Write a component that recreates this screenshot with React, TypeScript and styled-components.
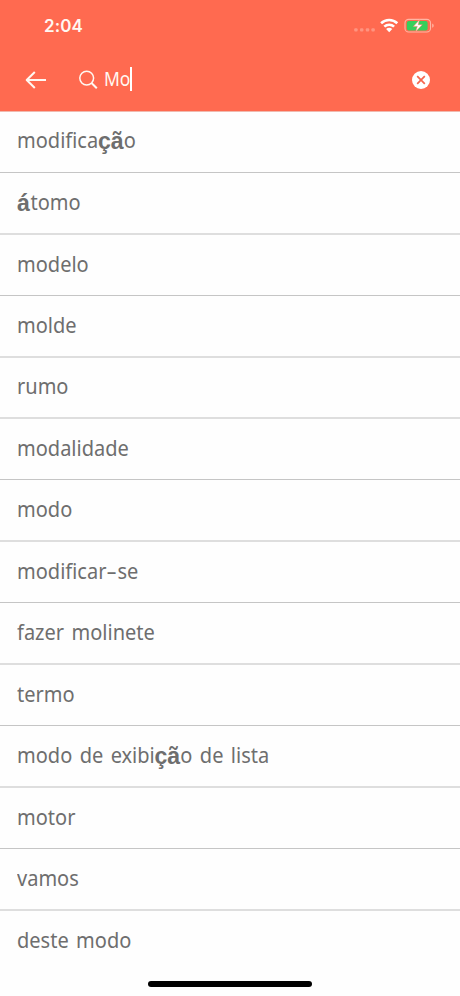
import React from "react";
import styled, { createGlobalStyle } from "styled-components";

const GlobalStyle = createGlobalStyle`
  * { box-sizing: border-box; }
  body { margin: 0; background: #fff; }
`;

const Screen = styled.div`
  width: 460px;
  height: 996px;
  display: flex;
  flex-direction: column;
  position: relative;
  overflow: hidden;
  background: #fefefe;
  font-family: "Noto Sans", sans-serif;
`;

const Header = styled.header`
  height: 112px;
  flex: none;
  background: #ff6a50;
  border-bottom: 1px solid #f0b9ae;
  color: #fff8f2;
`;

const StatusBar = styled.div`
  height: 50px;
  padding: 0 25px 0 44px;
  display: flex;
  align-items: center;
  justify-content: space-between;
`;

const Clock = styled.span`
  padding-top: 2px;
  font: 600 17px/20px Inter, sans-serif;
  letter-spacing: 0.1px;
`;

const StatusIcons = styled.svg`
  display: block;
`;

const SearchBar = styled.div`
  height: 60px;
  padding: 0 30px 0 25px;
  display: flex;
  align-items: center;
`;

const IconButton = styled.button`
  display: flex;
  padding: 0;
  border: 0;
  background: none;
  color: inherit;
`;

const Field = styled.div`
  flex: 1;
  margin-left: 32px;
  display: flex;
  align-items: center;
`;

const Query = styled.span`
  width: 26px;
  margin-left: 5px;
  padding-bottom: 2px;
  font-size: 19px;
  font-weight: 400;
  line-height: 26px;
  white-space: nowrap;
  transform: scaleX(0.92);
  transform-origin: left;
`;

const Caret = styled.span`
  width: 2px;
  height: 24px;
  margin-bottom: 2px;
  background: #fff;
`;

const List = styled.ul`
  margin: -1px 0 0;
  padding: 0;
  list-style: none;
`;

const Row = styled.li<{ $height: number; $soft: boolean }>`
  height: ${(p) => p.$height}px;
  padding: 0 17px 5px;
  display: flex;
  align-items: center;
  border-bottom: ${(p) => (p.$soft ? "2px solid #dedede" : "1px solid #c5c5c5")};
  &:last-child { border-bottom: 0; padding-bottom: 6px; }
`;

const Word = styled.span`
  color: #6e6e6e;
  font-size: 22px;
  line-height: 30px;
  white-space: nowrap;
  word-spacing: 2.4px;
  transform: scaleX(0.91);
  transform-origin: left;
`;

const Accent = styled.b`
  display: inline-block;
  font: 700 24px/24px "Liberation Sans", sans-serif;
  transform: scaleX(1.06);
  transform-origin: left;
  margin-right: 0.06em;
  position: relative;
  top: 1px;
`;

const Hyphen = styled.span`
  display: inline-block;
  width: 12px;
  transform: scaleX(1.65);
  transform-origin: left;
`;

const HomeIndicator = styled.div`
  position: absolute;
  left: 148px;
  bottom: 9px;
  width: 164px;
  height: 6px;
  border-radius: 3px;
  background: #000;
`;

const words = [
  { text: "modificação", height: 62, soft: false },
  { text: "átomo", height: 62, soft: true },
  { text: "modelo", height: 61, soft: false },
  { text: "molde", height: 62, soft: true },
  { text: "rumo", height: 61, soft: true },
  { text: "modalidade", height: 61, soft: false },
  { text: "modo", height: 62, soft: true },
  { text: "modificar-se", height: 61, soft: false },
  { text: "fazer molinete", height: 62, soft: true },
  { text: "termo", height: 61, soft: false },
  { text: "modo de exibição de lista", height: 62, soft: true },
  { text: "motor", height: 61, soft: false },
  { text: "vamos", height: 62, soft: true },
  { text: "deste modo", height: 61, soft: false },
];

const renderWord = (text: string) =>
  text.split(/([áçã]+|-)/).map((part, i) => {
    if (i % 2 === 0) return part;
    return part === "-" ? <Hyphen key={i}>-</Hyphen> : <Accent key={i}>{part}</Accent>;
  });

export default function App() {
  return (
    <Screen>
      <GlobalStyle />
      <Header>
        <StatusBar>
          <Clock>2:04</Clock>
          <StatusIcons width="82" height="20" viewBox="0 0 82 20">
            <g fill="#ff9480">
              <rect x="1.2" y="13.2" width="3.4" height="3.4" rx="1" />
              <rect x="7" y="13.2" width="3.4" height="3.4" rx="1" />
              <rect x="12.8" y="13.2" width="3.4" height="3.4" rx="1" />
              <rect x="18.4" y="13.2" width="3.4" height="3.4" rx="1" />
            </g>
            <g fill="none" stroke="#fff" strokeWidth="2.6">
              <path d="M28.1 8.2a11.8 11.8 0 0 1 16.2 0" />
              <path d="M31.3 11.6a7.2 7.2 0 0 1 9.8 0" />
            </g>
            <path d="M36.2 17.2l-3.1-3.1a4.5 4.5 0 0 1 6.2 0z" fill="#fff" />
            <rect x="52" y="4.4" width="25.5" height="12.6" rx="3.6" fill="none" stroke="#ffb6a3" strokeWidth="1.1" />
            <path d="M79.2 8.6q1.5.5 1.5 2.1t-1.5 2.1z" fill="#ffb6a3" />
            <rect x="53.8" y="6" width="20.8" height="9.4" rx="2" fill="#35cf5b" />
            <path d="M66.5 4.8L60.3 11.4h4l-1.7 5.3 6.7-7h-4.1z" fill="#fff" stroke="#ff7a5c" strokeWidth=".5" />
          </StatusIcons>
        </StatusBar>
        <SearchBar>
          <IconButton aria-label="Voltar">
            <svg width="22" height="20" viewBox="0 0 22 20" fill="none" stroke="currentColor" strokeWidth="2" strokeLinejoin="round">
              <path d="M21 10H2M9.8 2L1.7 10l8.1 8" />
            </svg>
          </IconButton>
          <Field>
            <svg width="20" height="20" viewBox="0 0 20 20" fill="none" stroke="currentColor" strokeWidth="1.5">
              <circle cx="7.7" cy="8.1" r="6.9" />
              <path d="M12.5 13l5.3 5.2" strokeWidth="2" />
            </svg>
            <Query>Mo</Query>
            <Caret />
          </Field>
          <IconButton aria-label="Limpar">
            <svg width="18" height="20" viewBox="0 0 18 20">
              <circle cx="9" cy="10" r="9" fill="#fff" />
              <path d="M5.2 6.2l7.6 7.6M12.8 6.2l-7.6 7.6" stroke="#f5654d" strokeWidth="1.7" />
            </svg>
          </IconButton>
        </SearchBar>
      </Header>
      <List>
        {words.map((w) => (
          <Row key={w.text} $height={w.height} $soft={w.soft}>
            <Word>{renderWord(w.text)}</Word>
          </Row>
        ))}
      </List>
      <HomeIndicator />
    </Screen>
  );
}
